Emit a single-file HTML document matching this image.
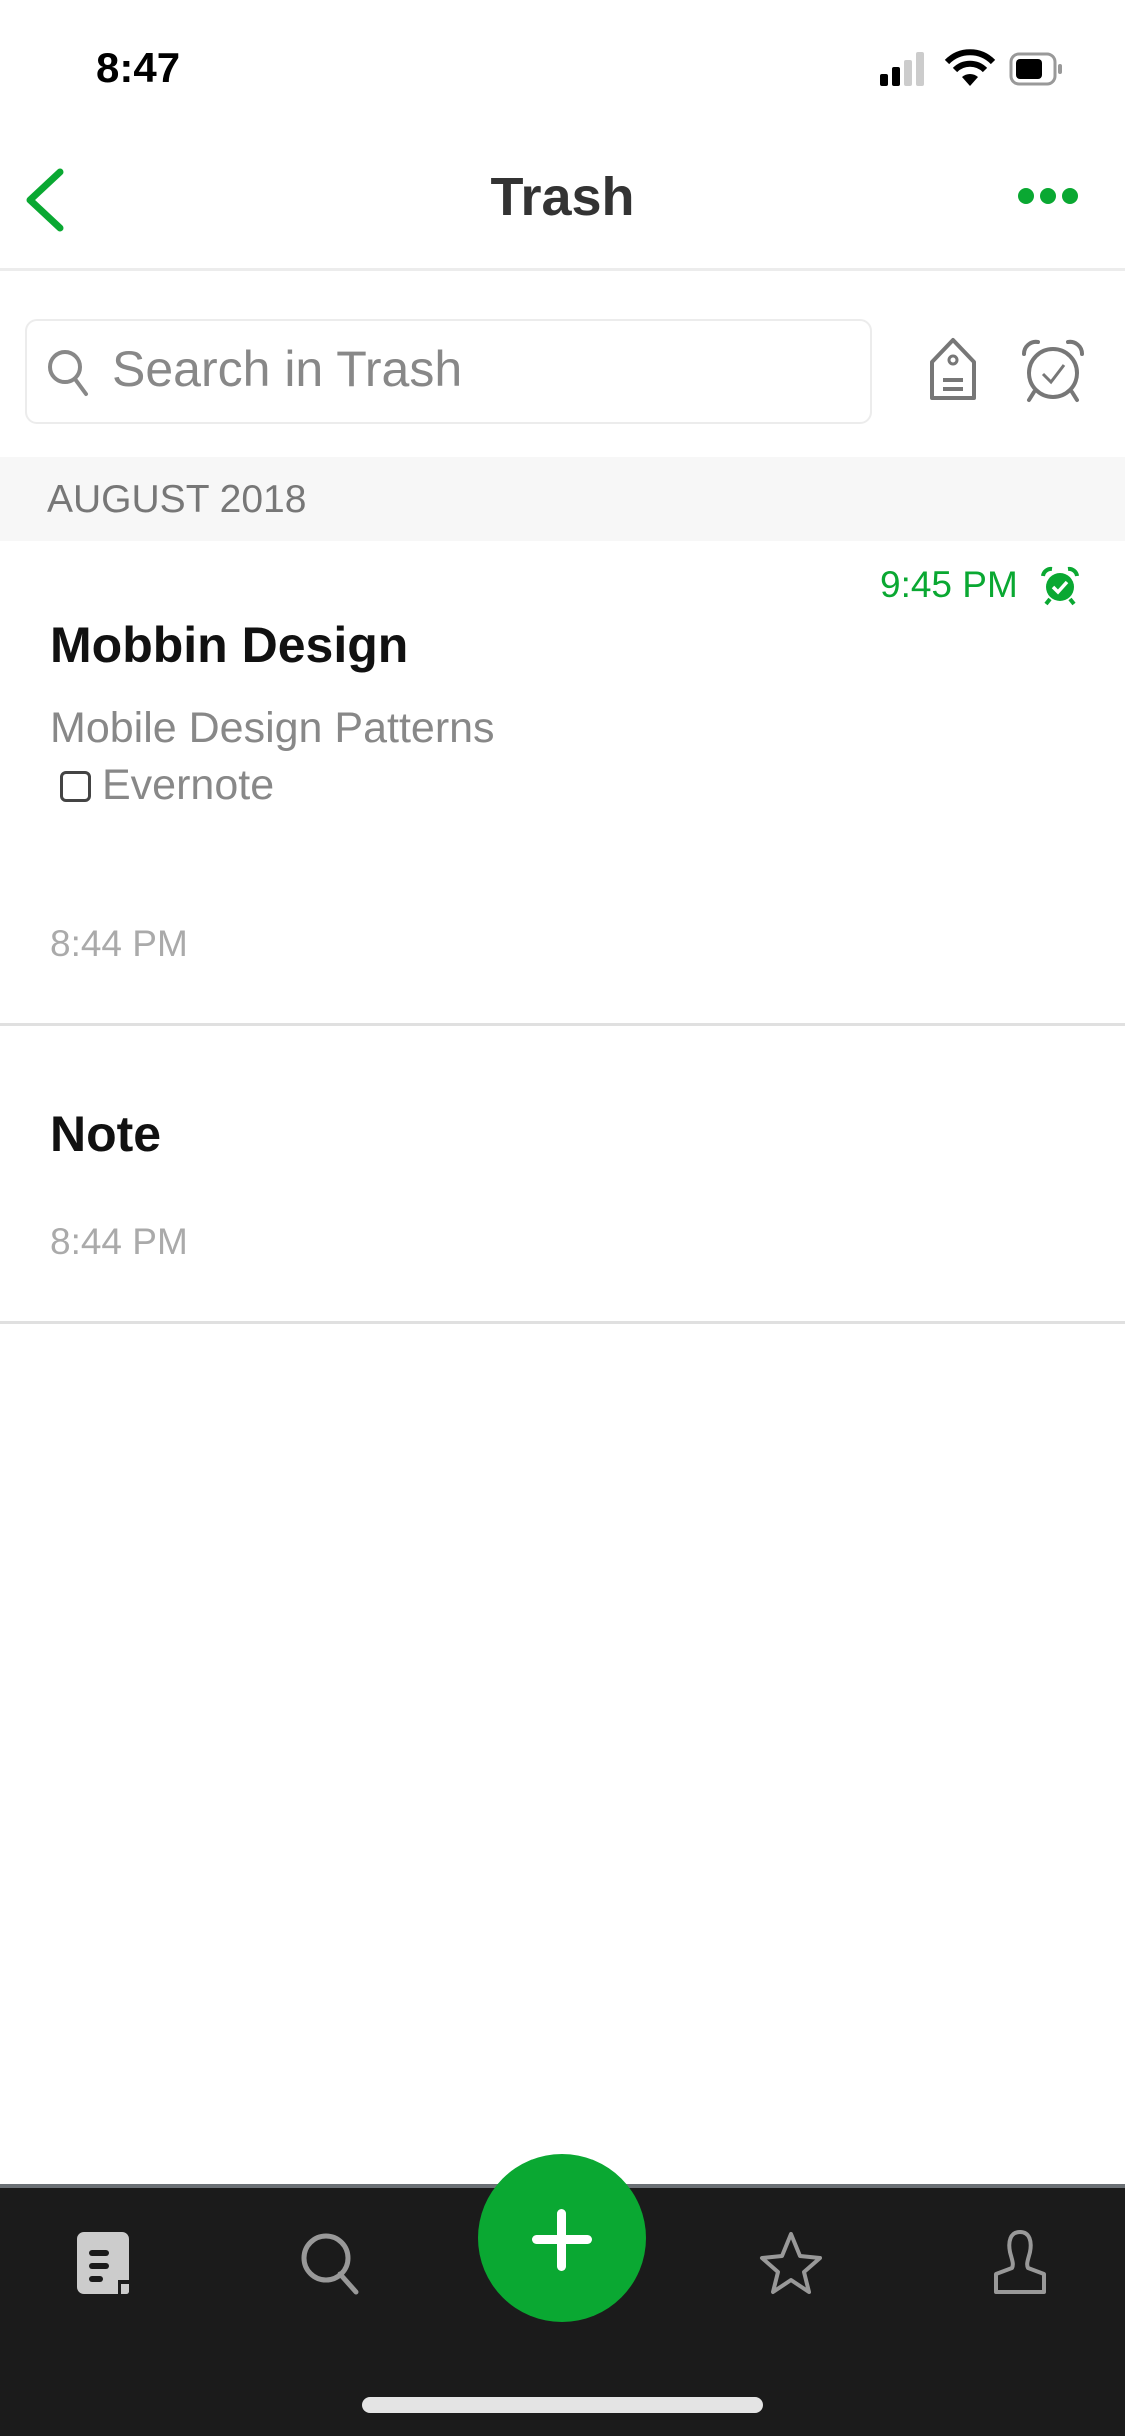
<!DOCTYPE html>
<html><head><meta charset="utf-8"><style>
*{margin:0;padding:0;box-sizing:border-box}
body{width:1125px;height:2436px;background:#fff;font-family:"Liberation Sans",sans-serif;position:relative;overflow:hidden}
.a{position:absolute;white-space:nowrap}
</style></head><body>
<div class="a" style="left:96px;top:44px;font-size:42px;font-weight:bold;color:#000">8:47</div>
<svg class="a" style="left:878px;top:48px" width="200" height="42" viewBox="0 0 200 42">
<rect x="2" y="26" width="8" height="12" rx="2" fill="#000"/><rect x="14" y="19" width="8" height="19" rx="2" fill="#000"/><rect x="26" y="12" width="8" height="26" rx="2" fill="#ccc"/><rect x="38" y="4" width="8" height="34" rx="2" fill="#ccc"/>
<path d="M92 38 L84 29 A12 12 0 0 1 100 29 Z" fill="#000"/>
<path d="M77 22 A21 21 0 0 1 107 22 M69 14 A32 32 0 0 1 115 14" stroke="#000" stroke-width="6" fill="none"/>
<rect x="133" y="6" width="44" height="30" rx="8" fill="none" stroke="#999" stroke-width="3"/><rect x="138" y="11" width="26" height="20" rx="4" fill="#000"/><rect x="180" y="16" width="4" height="10" rx="2" fill="#999"/>
</svg>
<svg class="a" style="left:22px;top:168px" width="44" height="64" viewBox="0 0 44 64"><path d="M38 4 L8 32 L38 60" stroke="#0aa832" stroke-width="7" fill="none" stroke-linecap="round" stroke-linejoin="round"/></svg>
<div class="a" style="left:0;width:1125px;text-align:center;top:166px;font-size:54px;font-weight:bold;color:#333">Trash</div>
<svg class="a" style="left:1016px;top:186px" width="64" height="20"><circle cx="10" cy="10" r="8" fill="#0aa832"/><circle cx="32" cy="10" r="8" fill="#0aa832"/><circle cx="54" cy="10" r="8" fill="#0aa832"/></svg>
<div class="a" style="left:0;top:268px;width:1125px;height:3px;background:#ececec"></div>
<div class="a" style="left:25px;top:319px;width:847px;height:105px;border:2px solid #ececec;border-radius:12px"></div>
<svg class="a" style="left:46px;top:348px" width="46" height="50" viewBox="0 0 46 50"><circle cx="19" cy="19" r="15" stroke="#888" stroke-width="4" fill="none"/><path d="M29 31 L40 46" stroke="#888" stroke-width="4" stroke-linecap="round"/></svg>
<div class="a" style="left:112px;top:340px;font-size:50px;color:#888">Search in Trash</div>
<svg class="a" style="left:926px;top:336px" width="54" height="68" viewBox="0 0 54 68"><path d="M27 4 L48 26 V62 H6 V26 Z" stroke="#777" stroke-width="4" fill="none" stroke-linejoin="round"/><circle cx="27" cy="24" r="4" stroke="#777" stroke-width="3" fill="none"/><path d="M17 44 H37 M17 53 H37" stroke="#777" stroke-width="4"/></svg>
<svg class="a" style="left:1020px;top:338px" width="66" height="66" viewBox="0 0 66 66"><circle cx="33" cy="35" r="24" stroke="#777" stroke-width="4" fill="none"/><path d="M4 16 A12 12 0 0 1 18 4 M62 16 A12 12 0 0 0 48 4 M14 54 L9 62 M52 54 L57 62" stroke="#777" stroke-width="4" fill="none" stroke-linecap="round"/><path d="M23 36 L31 44 L44 27" stroke="#777" stroke-width="3" fill="none"/></svg>
<div class="a" style="left:0;top:457px;width:1125px;height:84px;background:#f7f7f7"></div>
<div class="a" style="left:47px;top:478px;font-size:39px;color:#777">AUGUST 2018</div>
<div class="a" style="left:880px;top:564px;font-size:37px;color:#0aa832">9:45 PM</div>
<svg class="a" style="left:1040px;top:566px" width="40" height="40" viewBox="0 0 40 40"><circle cx="20" cy="21" r="14" fill="#0aa832"/><path d="M3 10 A8 8 0 0 1 12 3 M37 10 A8 8 0 0 0 28 3 M10 33 L6 38 M30 33 L34 38" stroke="#0aa832" stroke-width="4" fill="none"/><path d="M13 21 L18 26 L27 16" stroke="#fff" stroke-width="3.5" fill="none"/></svg>
<div class="a" style="left:50px;top:616px;font-size:50px;font-weight:bold;color:#111">Mobbin Design</div>
<div class="a" style="left:50px;top:704px;font-size:43px;color:#888">Mobile Design Patterns</div>
<div class="a" style="left:60px;top:771px;width:31px;height:31px;border:3px solid #444;border-radius:6px"></div>
<div class="a" style="left:102px;top:761px;font-size:43px;color:#888">Evernote</div>
<div class="a" style="left:50px;top:923px;font-size:37px;color:#aaa">8:44 PM</div>
<div class="a" style="left:0;top:1023px;width:1125px;height:3px;background:#e0e0e0"></div>
<div class="a" style="left:50px;top:1105px;font-size:50px;font-weight:bold;color:#111">Note</div>
<div class="a" style="left:50px;top:1221px;font-size:37px;color:#aaa">8:44 PM</div>
<div class="a" style="left:0;top:1321px;width:1125px;height:3px;background:#e0e0e0"></div>
<div class="a" style="left:0;top:2184px;width:1125px;height:252px;background:#1b1b1b;border-top:4px solid #6b7075"></div>
<svg class="a" style="left:76px;top:2230px" width="56" height="66" viewBox="0 0 56 66"><path d="M8 2 H46 A7 7 0 0 1 53 9 V50 H42 V64 H8 A7 7 0 0 1 1 57 V9 A7 7 0 0 1 8 2 Z" fill="#ccc"/><path d="M45 54 H53 V62 A3 3 0 0 1 50 64 H45 Z" fill="#ccc"/><rect x="13" y="20" width="20" height="6" rx="3" fill="#1b1b1b"/><rect x="13" y="33" width="20" height="6" rx="3" fill="#1b1b1b"/><rect x="13" y="46" width="14" height="6" rx="3" fill="#1b1b1b"/></svg>
<svg class="a" style="left:298px;top:2230px" width="70" height="66" viewBox="0 0 70 66"><circle cx="28" cy="28" r="22" stroke="#999" stroke-width="5" fill="none"/><path d="M42 44 L58 62" stroke="#999" stroke-width="5" stroke-linecap="round"/></svg>
<div class="a" style="left:478px;top:2154px;width:168px;height:168px;border-radius:50%;background:#0aa832"></div>
<div class="a" style="left:532px;top:2235px;width:60px;height:9px;border-radius:5px;background:#fff"></div>
<div class="a" style="left:557px;top:2209px;width:9px;height:62px;border-radius:5px;background:#fff"></div>
<svg class="a" style="left:756px;top:2230px" width="70" height="66" viewBox="0 0 70 66"><path d="M35 4 L44 26 L64 28 L48 42 L53 62 L35 50 L17 62 L22 42 L6 28 L26 26 Z" stroke="#999" stroke-width="4" fill="none" stroke-linejoin="round"/></svg>
<svg class="a" style="left:990px;top:2228px" width="60" height="68" viewBox="0 0 60 68"><path d="M30 4 C20 4 18 14 20 24 C22 32 24 36 22 40 L6 46 V64 H54 V46 L38 40 C36 36 38 32 40 24 C42 14 40 4 30 4 Z" stroke="#999" stroke-width="4" fill="none" stroke-linejoin="round"/></svg>
<div class="a" style="left:362px;top:2397px;width:401px;height:16px;border-radius:8px;background:#e4e4e4"></div>
</body></html>
